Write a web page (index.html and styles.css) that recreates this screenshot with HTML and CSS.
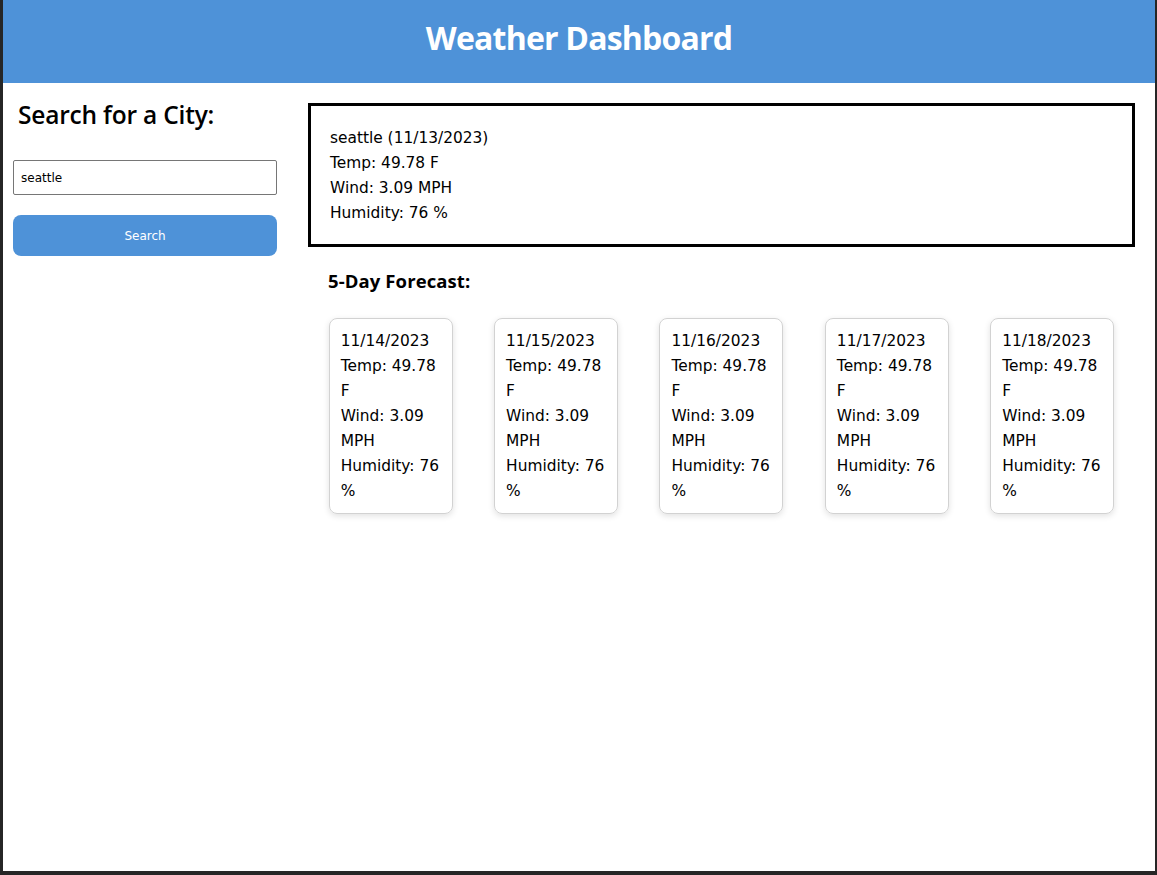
FILE: index.html
```html
<!DOCTYPE html>
<html lang="en">
<head>
<meta charset="utf-8">
<title>Weather Dashboard</title>
<link rel="stylesheet" href="styles.css">
</head>
<body>
<div class="page">
  <header class="header">
    <h1 class="title">Weather Dashboard</h1>
  </header>
  <div class="layout">
    <aside class="sidebar">
      <h2 class="search-title">Search for a City:</h2>
      <input class="search-input" type="text" value="seattle">
      <button class="search-btn" type="button">Search</button>
    </aside>
    <main class="content">
      <section class="current">
        <div class="line">seattle (11/13/2023)</div>
        <div class="line">Temp: 49.78 F</div>
        <div class="line">Wind: 3.09 MPH</div>
        <div class="line">Humidity: 76 %</div>
      </section>
      <h3 class="forecast-title">5-Day Forecast:</h3>
      <div class="forecast">
        <div class="card">
          <div>11/14/2023</div>
          <div>Temp: 49.78 F</div>
          <div>Wind: 3.09 MPH</div>
          <div>Humidity: 76 %</div>
        </div>
        <div class="card">
          <div>11/15/2023</div>
          <div>Temp: 49.78 F</div>
          <div>Wind: 3.09 MPH</div>
          <div>Humidity: 76 %</div>
        </div>
        <div class="card">
          <div>11/16/2023</div>
          <div>Temp: 49.78 F</div>
          <div>Wind: 3.09 MPH</div>
          <div>Humidity: 76 %</div>
        </div>
        <div class="card">
          <div>11/17/2023</div>
          <div>Temp: 49.78 F</div>
          <div>Wind: 3.09 MPH</div>
          <div>Humidity: 76 %</div>
        </div>
        <div class="card">
          <div>11/18/2023</div>
          <div>Temp: 49.78 F</div>
          <div>Wind: 3.09 MPH</div>
          <div>Humidity: 76 %</div>
        </div>
      </div>
    </main>
  </div>
</div>
</body>
</html>
```
FILE: styles.css
```css
html, body {
  margin: 0;
  padding: 0;
  height: 100%;
}

body {
  background: #262626;
  padding: 0 2px 4px 3px;
  box-sizing: border-box;
  font-family: "DejaVu Sans", Verdana, sans-serif;
  color: #000;
}

.page {
  background: #fff;
  height: 100%;
}

.header {
  background: #4e92d8;
  height: 83px;
  display: flex;
  align-items: center;
  justify-content: center;
}

.title {
  margin: 0;
  color: #fff;
  font-family: "Open Sans", sans-serif;
  font-weight: 700;
  font-size: 32px;
  letter-spacing: -0.8px;
  line-height: 40px;
  padding-bottom: 8px;
}

.layout {
  display: grid;
  grid-template-columns: 264px 1fr;
  column-gap: 31px;
  padding: 0 20px 0 10px;
}

.sidebar {
  padding-top: 17px;
  display: flex;
  flex-direction: column;
}

.search-title {
  margin: 0 0 30px 0;
  padding-left: 5px;
  font-family: "Open Sans", sans-serif;
  font-weight: 600;
  font-size: 24.5px;
  letter-spacing: -0.2px;
  line-height: 30px;
}

.search-input {
  box-sizing: border-box;
  width: 100%;
  height: 35px;
  margin: 0;
  padding: 0 7px;
  border: 1px solid #767676;
  border-radius: 2px;
  font-family: "DejaVu Sans", sans-serif;
  font-size: 12px;
  color: #000;
}

.search-btn {
  margin-top: 20px;
  height: 41px;
  width: 100%;
  border: none;
  border-radius: 8px;
  background: #4e92d8;
  color: #fff;
  font-family: "DejaVu Sans", sans-serif;
  font-size: 12px;
}

.content {
  padding-top: 20px;
}

.current {
  border: 3px solid #000;
  padding: 20px 19px 18px 19px;
  font-size: 15.4px;
  line-height: 25px;
}

.forecast-title {
  margin: 22px 0 25px 20px;
  font-family: "Open Sans", sans-serif;
  font-weight: 700;
  font-size: 18.5px;
  letter-spacing: 0.1px;
  line-height: 24px;
}

.forecast {
  display: flex;
  justify-content: space-around;
  align-items: flex-start;
}

.card {
  box-sizing: border-box;
  width: 124px;
  border: 1px solid #d2d2d2;
  border-radius: 8px;
  padding: 10px 10px 9px 11px;
  box-shadow: 0 2px 6px rgba(0, 0, 0, 0.12);
  font-size: 15.4px;
  line-height: 25px;
}
```
